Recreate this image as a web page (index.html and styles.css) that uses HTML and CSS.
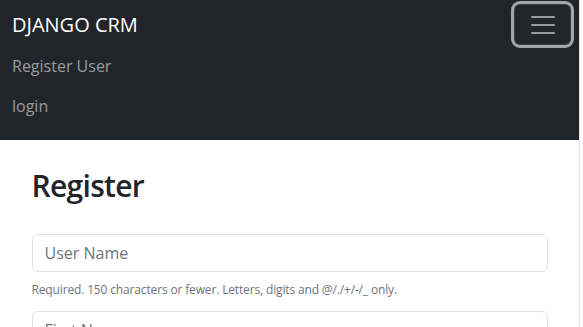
FILE: index.html
```html
<!DOCTYPE html>
<html lang="en">
<head>
<meta charset="utf-8">
<title>Django CRM</title>
<link rel="stylesheet" href="styles.css">
</head>
<body>
<div class="page">
  <nav class="navbar">
    <div class="nav-top">
      <a class="brand" href="#">DJANGO CRM</a>
      <button class="toggler" type="button" aria-label="Toggle navigation">
        <svg class="toggler-icon" viewBox="0 0 30 30" width="30" height="30">
          <path d="M4 7h22M4 15h22M4 23h22" stroke="rgba(255,255,255,0.55)" stroke-width="2" stroke-linecap="round" fill="none"/>
        </svg>
      </button>
    </div>
    <ul class="nav-links">
      <li><a class="nav-link" href="#">Register User</a></li>
      <li><a class="nav-link" href="#">login</a></li>
    </ul>
  </nav>
  <main class="container">
    <h1 class="title">Register</h1>
    <form class="form">
      <div class="field">
        <input class="form-control" type="text" placeholder="User Name">
        <div class="form-text"><small>Required. 150 characters or fewer. Letters, digits and @/./+/-/_ only.</small></div>
      </div>
      <div class="field">
        <input class="form-control" type="text" placeholder="First Name">
      </div>
    </form>
  </main>
</div>
</body>
</html>
```

FILE: styles.css
```css
* { box-sizing: border-box; }
html, body { margin: 0; padding: 0; }
body {
  background: #fff;
  font-family: "Open Sans", "Noto Sans", sans-serif;
  color: #212529;
  overflow: hidden;
}
.page {
  width: 580px;
  min-height: 327px;
  border-right: 1px solid #e3e7ec;
}
.navbar {
  background: #212529;
  padding: 3px 12px 14px;
}
.nav-top {
  display: flex;
  align-items: center;
  justify-content: space-between;
  height: 43px;
}
.brand {
  color: #fff;
  text-decoration: none;
  font-size: 20px;
  line-height: 30px;
}
.toggler {
  width: 57px;
  height: 41px;
  margin-right: -4px;
  padding: 4px 12px;
  background: transparent;
  border: 1px solid rgba(255,255,255,0.12);
  border-radius: 6px;
  box-shadow: 0 0 0 3px #a3a6a9;
  display: flex;
  align-items: center;
  justify-content: center;
}
.toggler-icon { display: block; }
.nav-links {
  list-style: none;
  margin: 0;
  padding: 0;
}
.nav-link {
  display: block;
  padding: 8px 0;
  line-height: 24px;
  font-size: 16px;
  color: rgba(255,255,255,0.55);
  text-decoration: none;
}
.container {
  width: 540px;
  margin: 0 auto;
  padding: 28px 12px 0;
}
.title {
  margin: 0 0 30px;
  font-size: 30px;
  font-weight: 600;
  letter-spacing: -0.7px;
  line-height: 1.2;
}
.field { margin-bottom: 12px; }
.form-control {
  display: block;
  width: 100%;
  height: 38px;
  padding: 6px 12px;
  font-family: inherit;
  font-size: 16px;
  line-height: 24px;
  color: #212529;
  background: #fff;
  border: 1px solid #dee2e6;
  border-radius: 6px;
}
.form-control::placeholder { color: #6c757d; }
.form-text {
  margin-top: 6px;
  font-size: 14px;
  color: #6c757d;
  line-height: 1.5;
}
.form-text small { font-size: 12px; letter-spacing: -0.15px; }
```
